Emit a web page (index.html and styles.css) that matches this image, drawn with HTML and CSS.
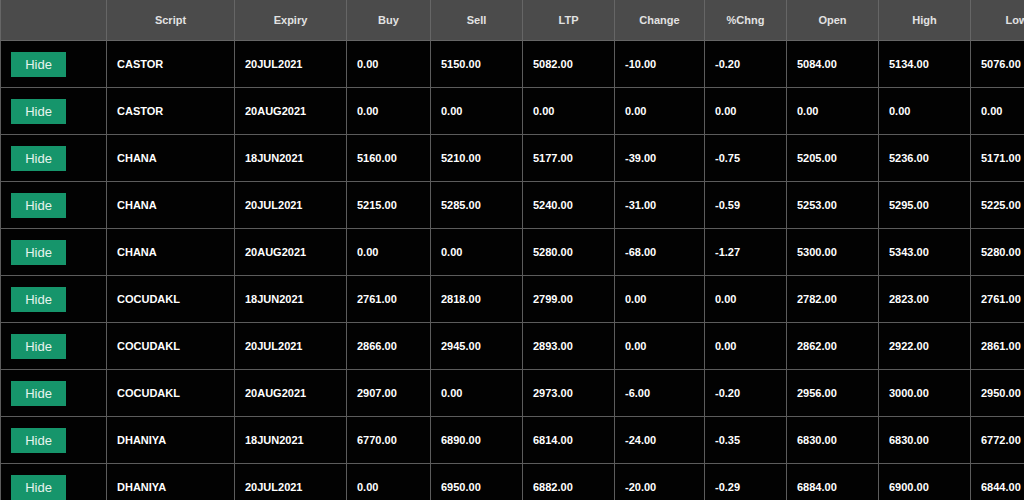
FILE: index.html
```html
<!DOCTYPE html>
<html>
<head>
<meta charset="utf-8">
<link rel="stylesheet" href="styles.css">
</head>
<body>
<div class="wrap">
<table class="grid">
<colgroup>
<col class="c-act"><col class="c-script"><col class="c-exp"><col class="c-buy"><col class="c-sell"><col class="c-ltp"><col class="c-chg"><col class="c-pct"><col class="c-open"><col class="c-high"><col class="c-low">
</colgroup>
<thead>
<tr><th></th><th>Script</th><th>Expiry</th><th>Buy</th><th>Sell</th><th>LTP</th><th>Change</th><th>%Chng</th><th>Open</th><th>High</th><th>Low</th></tr>
</thead>
<tbody>
<tr><td><button class="hide">Hide</button></td><td>CASTOR</td><td>20JUL2021</td><td>0.00</td><td>5150.00</td><td>5082.00</td><td>-10.00</td><td>-0.20</td><td>5084.00</td><td>5134.00</td><td>5076.00</td></tr>
<tr><td><button class="hide">Hide</button></td><td>CASTOR</td><td>20AUG2021</td><td>0.00</td><td>0.00</td><td>0.00</td><td>0.00</td><td>0.00</td><td>0.00</td><td>0.00</td><td>0.00</td></tr>
<tr><td><button class="hide">Hide</button></td><td>CHANA</td><td>18JUN2021</td><td>5160.00</td><td>5210.00</td><td>5177.00</td><td>-39.00</td><td>-0.75</td><td>5205.00</td><td>5236.00</td><td>5171.00</td></tr>
<tr><td><button class="hide">Hide</button></td><td>CHANA</td><td>20JUL2021</td><td>5215.00</td><td>5285.00</td><td>5240.00</td><td>-31.00</td><td>-0.59</td><td>5253.00</td><td>5295.00</td><td>5225.00</td></tr>
<tr><td><button class="hide">Hide</button></td><td>CHANA</td><td>20AUG2021</td><td>0.00</td><td>0.00</td><td>5280.00</td><td>-68.00</td><td>-1.27</td><td>5300.00</td><td>5343.00</td><td>5280.00</td></tr>
<tr><td><button class="hide">Hide</button></td><td>COCUDAKL</td><td>18JUN2021</td><td>2761.00</td><td>2818.00</td><td>2799.00</td><td>0.00</td><td>0.00</td><td>2782.00</td><td>2823.00</td><td>2761.00</td></tr>
<tr><td><button class="hide">Hide</button></td><td>COCUDAKL</td><td>20JUL2021</td><td>2866.00</td><td>2945.00</td><td>2893.00</td><td>0.00</td><td>0.00</td><td>2862.00</td><td>2922.00</td><td>2861.00</td></tr>
<tr><td><button class="hide">Hide</button></td><td>COCUDAKL</td><td>20AUG2021</td><td>2907.00</td><td>0.00</td><td>2973.00</td><td>-6.00</td><td>-0.20</td><td>2956.00</td><td>3000.00</td><td>2950.00</td></tr>
<tr><td><button class="hide">Hide</button></td><td>DHANIYA</td><td>18JUN2021</td><td>6770.00</td><td>6890.00</td><td>6814.00</td><td>-24.00</td><td>-0.35</td><td>6830.00</td><td>6830.00</td><td>6772.00</td></tr>
<tr><td><button class="hide">Hide</button></td><td>DHANIYA</td><td>20JUL2021</td><td>0.00</td><td>6950.00</td><td>6882.00</td><td>-20.00</td><td>-0.29</td><td>6884.00</td><td>6900.00</td><td>6844.00</td></tr>
</tbody>
</table>
</div>
</body>
</html>
```
FILE: styles.css
```css
html, body {
  margin: 0;
  padding: 0;
  background: #000;
  overflow: hidden;
  height: 500px;
}
.wrap {
  width: 1024px;
  overflow: hidden;
}
.grid {
  border-collapse: collapse;
  table-layout: fixed;
  width: 1063px;
  font-family: "Liberation Sans", Arial, sans-serif;
  font-size: 11px;
  font-weight: bold;
  color: #fff;
}
.c-act { width: 106px; }
.c-script { width: 128px; }
.c-exp { width: 112px; }
.c-buy { width: 84px; }
.c-sell { width: 92px; }
.c-ltp { width: 92px; }
.c-chg { width: 90px; }
.c-pct { width: 82px; }
.c-open { width: 92px; }
.c-high { width: 92px; }
.c-low { width: 92px; }
.grid th {
  background: #4b4b4b;
  color: #e2e2e2;
  height: 40px;
  padding: 0;
  text-align: center;
  border: 1px solid #666;
  border-top: none;
  white-space: nowrap;
}
.grid td {
  background: #020202;
  height: 46px;
  padding: 0 0 0 10px;
  border: 1px solid #5c5c5c;
  white-space: nowrap;
  vertical-align: middle;
}
.hide {
  display: block;
  width: 55px;
  height: 25px;
  margin: 0;
  padding: 0;
  border: none;
  border-radius: 0;
  background: #16956b;
  color: #e6f4ee;
  font-family: "Liberation Sans", Arial, sans-serif;
  font-size: 13px;
  font-weight: normal;
  cursor: pointer;
}
```
